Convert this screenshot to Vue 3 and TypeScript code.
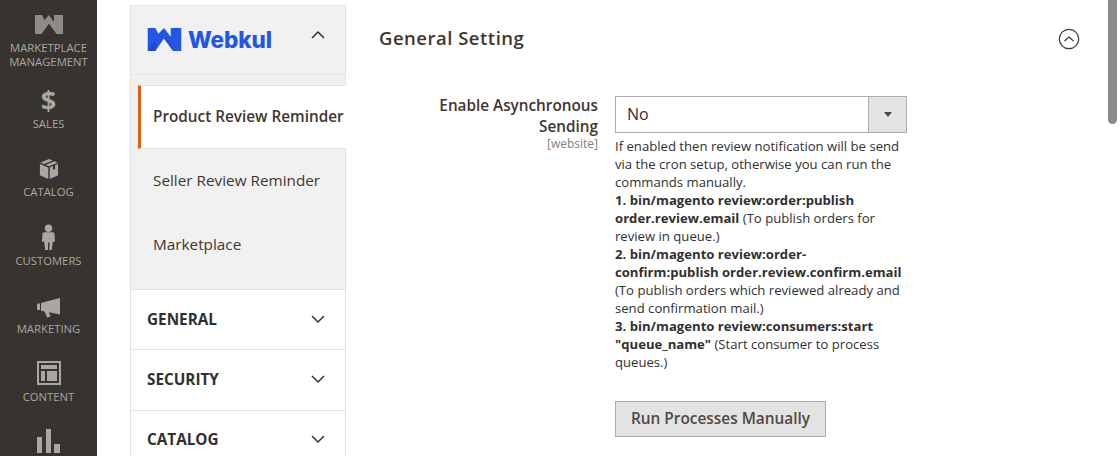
<template>
  <div class="page">
    <nav class="menu">
      <a v-for="item in menu" :key="item.id" class="menu-item" :class="'mi-' + item.id">
        <span class="menu-icon">
          <svg v-if="item.id === 'mp'" width="28" height="19" viewBox="0 0 28 19"><path d="M0 0h7l2.500 5L14 0l5 7V0h9v19h-6.500L14 8.500 6.500 19H0z" fill="#8f8b86" /></svg>
          <span v-else-if="item.id === 'sales'" class="dollar">$</span>
          <svg v-else-if="item.id === 'catalog'" class="ic-box" width="20" height="22" viewBox="0 0 22 24"><path d="M11 1l4 1.600-9.500 4L1.400 5zM17 3.400l3.600 1.600-9.600 4-3.600-1.600zM1 6.500l9.200 3.800V23L1 18.800zM21 6.500V18.800L11.800 23V10.300l3.700-1.500v4.200l2.200-.9V7.900z" fill="#aaa6a0" /></svg>
          <svg v-else-if="item.id === 'customers'" width="13" height="26" viewBox="0 0 14 28"><circle cx="7" cy="4.500" r="4" fill="#aaa6a0" /><path d="M2.500 9h9c1.300 0 2 .8 2 2l.5 8h-2.500v2l-1 7H8V20H6.500v8H3.500l-1-7v-2H0l.5-8c0-1.200 1-2 2-2z" fill="#aaa6a0" /></svg>
          <svg v-else-if="item.id === 'marketing'" class="ic-horn" width="24" height="20" viewBox="0 0 24 20"><path d="M0 6l3-.8v7L0 11.500zM4 5l19-5v16.500l-11-2.200 1.500 4.200-3.500 1-2.500-6-3.500-.8z" fill="#aaa6a0" /></svg>
          <svg v-else-if="item.id === 'content'" width="24" height="24" viewBox="0 0 24 24"><path fill-rule="evenodd" d="M0 0h24v24H0zM2 2v20h20V2z" fill="#aaa6a0" /><path d="M4 4h16v4H4zM4 10h4v10H4zM10 10h10v10H10z" fill="#aaa6a0" /></svg>
          <svg v-else width="24" height="24" viewBox="0 0 24 24"><path d="M0 8h5v16H0zM9 0h5v24H9zM17 15h6v9h-6z" fill="#aaa6a0" /></svg>
        </span>
        <span class="menu-label">{{ item.label }}</span>
      </a>
    </nav>

    <aside class="tabs">
      <div class="tab-group">
        <div class="tab-head">
          <svg class="logo" width="35" height="23" viewBox="0 0 35 24"><path d="M0 0h8l3 6 6-6 7 9V0h11v24h-8L17 11 8 24H0z" fill="#2456e6" /><path d="M0 24l7-11 2 4-1 7zM26 24l-9-13 2-1 9 14z" fill="#1c3fc0" opacity=".6" /></svg>
          <span class="brand">Webkul</span>
          <svg class="chev" width="16" height="10" viewBox="0 0 16 10"><path d="M2 8l6-6 6 6" fill="none" stroke="#303030" stroke-width="1.500" /></svg>
        </div>
        <div class="tab-list">
          <a class="sub active">Product Review Reminder</a>
          <a class="sub">Seller Review Reminder</a>
          <a class="sub">Marketplace</a>
        </div>
      </div>
      <div v-for="s in sections" :key="s" class="section">
        <span>{{ s }}</span>
        <svg width="16" height="10" viewBox="0 0 16 10"><path d="M2 2l6 6 6-6" fill="none" stroke="#303030" stroke-width="1.500" /></svg>
      </div>
    </aside>

    <main class="main">
      <header class="title-row">
        <h2>General Setting</h2>
        <svg width="22" height="22" viewBox="0 0 22 22"><circle cx="11" cy="11" r="9.700" fill="none" stroke="#41362f" stroke-width="1.200" /><path d="M6.500 13l4.500-4 4.500 4" fill="none" stroke="#41362f" stroke-width="1.300" /></svg>
      </header>
      <div class="field">
        <div class="field-label">
          <label>Enable Asynchronous Sending</label>
          <small>[website]</small>
        </div>
        <div class="field-value">
          <div class="select">
            <span class="select-val">No</span>
            <span class="select-arrow"><i /></span>
          </div>
          <p class="note">
            If enabled then review notification will be send via the cron setup, otherwise you can run the commands manually.<br />
            <b>1. bin/magento review:order:publish order.review.email</b> (To publish orders for review in queue.)<br />
            <b>2. bin/magento review:order-confirm:publish order.review.confirm.email</b> (To publish orders which reviewed already and send confirmation mail.)<br />
            <b>3. bin/magento review:consumers:start "queue_name"</b> (Start consumer to process queues.)
          </p>
          <button class="run" type="button">Run Processes Manually</button>
        </div>
      </div>
    </main>

    <div class="scroll"><div class="thumb" /></div>
  </div>
</template>

<script setup lang="ts">
const menu = [
  { id: 'mp', label: 'MARKETPLACE MANAGEMENT' },
  { id: 'sales', label: 'SALES' },
  { id: 'catalog', label: 'CATALOG' },
  { id: 'customers', label: 'CUSTOMERS' },
  { id: 'marketing', label: 'MARKETING' },
  { id: 'content', label: 'CONTENT' },
  { id: 'reports', label: 'REPORTS' },
];
const sections = ['GENERAL', 'SECURITY', 'CATALOG'];
</script>

<style>
html, body { margin: 0; overflow: hidden; }
</style>

<style scoped>
.page {
  position: relative; display: flex; width: 1120px; height: 456px; overflow: hidden; background: #fff;
  font-family: "Open Sans", sans-serif; color: #303030;
}
.menu { flex: 0 0 97px; background: #373330; display: flex; flex-direction: column; }
.menu-item { flex: none; display: flex; flex-direction: column; align-items: center; height: 68px; justify-content: flex-end; padding-bottom: 4px; box-sizing: border-box; }
.mi-mp { height: 73px; }
.mi-sales { height: 62px; }
.mi-customers { height: 69px; }
.menu-icon { height: 34px; display: flex; align-items: center; justify-content: center; }
.ic-box { margin-top: 2px; }
.ic-horn { margin-top: 6px; }
.menu-label { color: #aaa6a0; font-size: 11.300px; line-height: 14px; text-align: center; width: 90px; }
.dollar { color: #aaa6a0; font-size: 27px; font-weight: 700; line-height: 34px; }

.tabs { flex: 0 0 216px; width: 216px; min-width: 0; margin: 5px 0 0 33px; }
.tab-group { border: 1px solid #e3e3e3; border-bottom: 0; background: #f1f1f1; height: 284px; box-sizing: border-box; }
.tab-head { height: 69px; display: flex; align-items: center; padding: 0 19px 0 16px; border-bottom: 1px solid #e3e3e3; box-sizing: border-box; }
.logo { flex: none; margin-bottom: 2px; }
.brand { margin-left: 6px; color: #2456e6; font-family: Inter, sans-serif; font-size: 22.500px; font-weight: 800; line-height: 24px; flex: 1; letter-spacing: -.1px; }
.chev { flex: none; margin-bottom: 10px; }
.tab-list { padding: 10px 0 0 7px; }
.sub { display: flex; align-items: center; height: 64px; padding: 0 0 2px 15px; box-sizing: border-box; font-size: 15.300px; white-space: nowrap; color: #41362f; }
.sub:last-child { padding-bottom: 3px; }
.sub.active { background: #fff; border-left: 3px solid #e65e15; font-weight: 600; padding-left: 12px; border-bottom: 1px solid #e3e3e3; border-top: 1px solid #e3e3e3; margin-right: -1px; }
.section { display: flex; align-items: center; justify-content: space-between; height: 60px; box-sizing: border-box; padding: 0 19px 2px 16px; border: 1px solid #e3e3e3; border-bottom: 0; font-size: 15.300px; font-weight: 700; color: #303030; }
.section + .section { height: 61px; }
.section + .section + .section { padding-bottom: 5px; }

.main { flex: 1; min-width: 0; padding: 0 40px 0 33px; }
.title-row { display: flex; justify-content: space-between; align-items: center; height: 28px; margin-top: 23px; }
.title-row svg { margin-top: 3px; }
.title-row h2 { margin: 0; font-size: 18.500px; font-weight: 600; letter-spacing: .5px; color: #41362f; }
.field { display: flex; margin-top: 45px; }
.field-label { width: 219px; text-align: right; }
.field-label label { display: block; font-size: 15.300px; font-weight: 600; line-height: 21px; margin: -1px 0 0 40px; color: #41362f; }
.field-label small { display: block; font-size: 12px; line-height: 14px; color: #808080; }
.field-value { width: 292px; margin-left: 17px; }
.select { display: flex; height: 37px; border: 1px solid #adadad; box-sizing: border-box; }
.select-val { flex: 1; padding-left: 11px; font-size: 16px; line-height: 35px; color: #303030; }
.select-arrow { flex: 0 0 37px; background: #e3e3e3; border-left: 1px solid #adadad; display: flex; align-items: center; justify-content: center; }
.select-arrow i { border: 4.500px solid transparent; border-top: 5px solid #514943; border-bottom: 0; }
.note { margin: 4px 0 0; font-size: 13.130px; line-height: 18px; color: #303030; }
.note b { font-weight: 700; }
.run { display: block; margin-top: 30px; width: 211px; height: 36px; padding: 0 0 2px; background: #e3e3e3; border: 1px solid #adadad; font-family: inherit; font-size: 15.400px; font-weight: 600; color: #514943; }
.scroll { position: absolute; left: 1106px; top: 0; width: 14px; height: 456px; background: #fff; }
.thumb { width: 9px; height: 124px; margin-left: 2px; background: #8a8a8a; border-radius: 0 0 5px 5px; }
</style>
